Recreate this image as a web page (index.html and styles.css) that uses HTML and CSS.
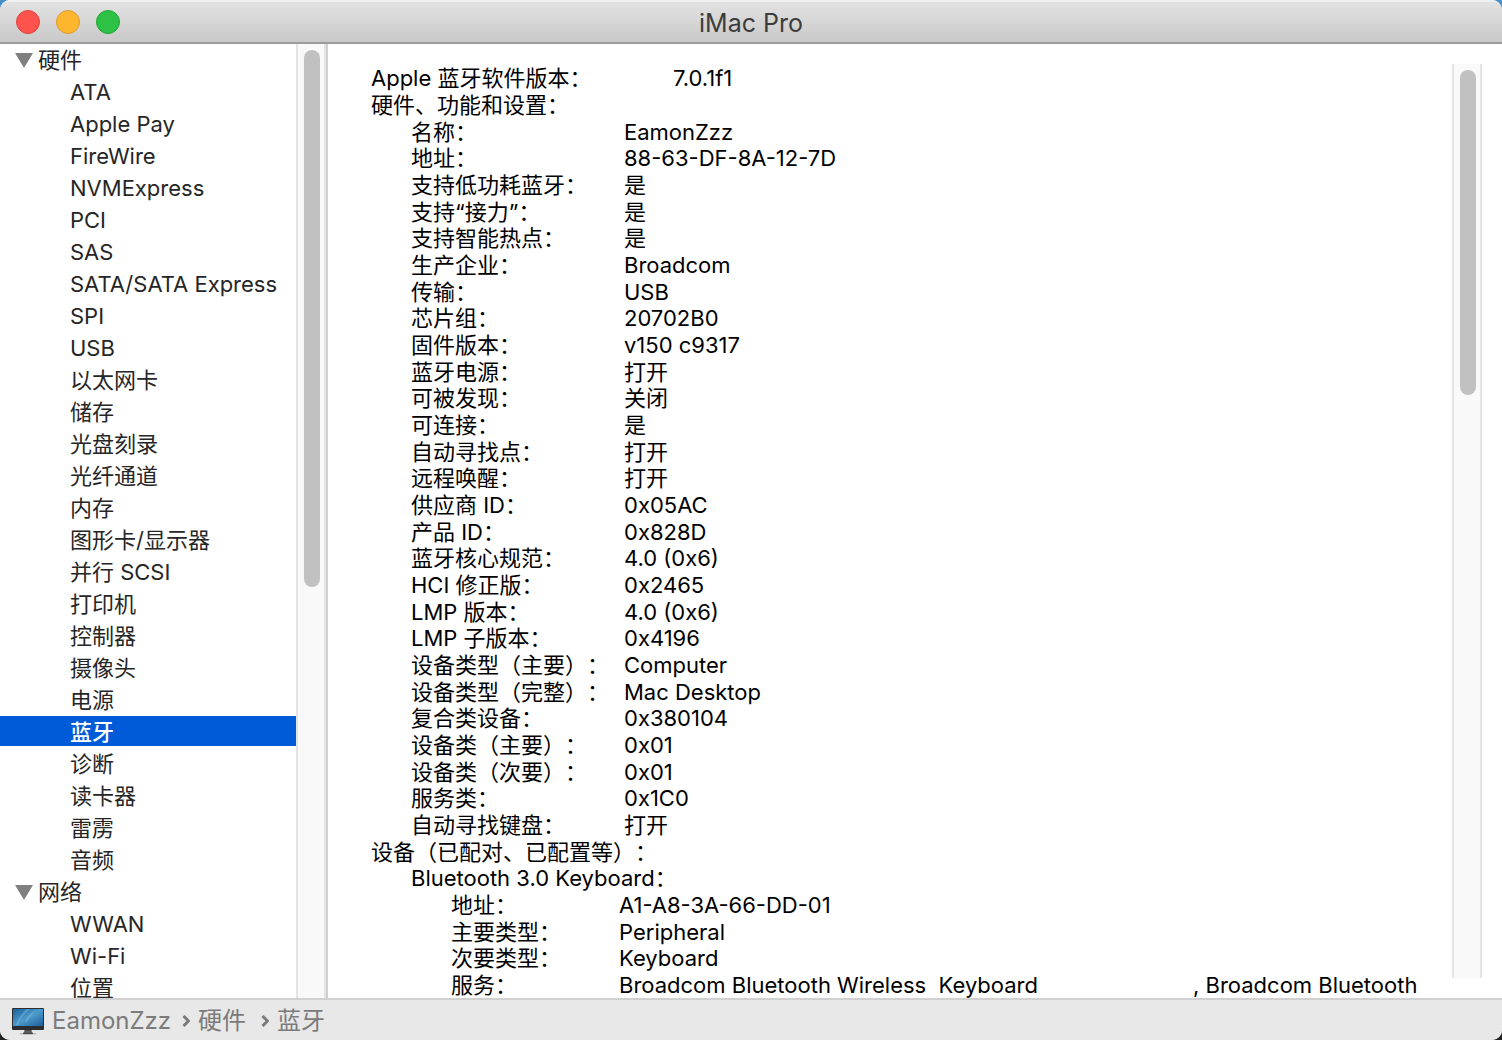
FILE: index.html
```html
<!DOCTYPE html>
<html lang="zh-CN">
<head>
<meta charset="utf-8">
<title>iMac Pro</title>
<link rel="stylesheet" href="styles.css">
</head>
<body>
<div class="window">
  <header class="titlebar">
    <div class="lights">
      <button class="light close" aria-label="关闭"></button>
      <button class="light minimize" aria-label="最小化"></button>
      <button class="light expand" aria-label="缩放"></button>
    </div>
    <h1 class="title">iMac Pro</h1>
  </header>
  <main class="main">
    <nav class="sidebar">
      <div class="tree">
        <button class="group"><svg class="arrow" viewBox="0 0 18 15" aria-hidden="true"><path d="M0 0H18L9 15Z"/></svg>硬件</button>
        <button class="item">ATA</button>
        <button class="item">Apple Pay</button>
        <button class="item">FireWire</button>
        <button class="item">NVMExpress</button>
        <button class="item">PCI</button>
        <button class="item">SAS</button>
        <button class="item">SATA/SATA Express</button>
        <button class="item">SPI</button>
        <button class="item">USB</button>
        <button class="item">以太网卡</button>
        <button class="item">储存</button>
        <button class="item">光盘刻录</button>
        <button class="item">光纤通道</button>
        <button class="item">内存</button>
        <button class="item">图形卡/显示器</button>
        <button class="item">并行 SCSI</button>
        <button class="item">打印机</button>
        <button class="item">控制器</button>
        <button class="item">摄像头</button>
        <button class="item">电源</button>
        <button class="item selected">蓝牙</button>
        <button class="item">诊断</button>
        <button class="item">读卡器</button>
        <button class="item">雷雳</button>
        <button class="item">音频</button>
        <button class="group"><svg class="arrow" viewBox="0 0 18 15" aria-hidden="true"><path d="M0 0H18L9 15Z"/></svg>网络</button>
        <button class="item">WWAN</button>
        <button class="item">Wi-Fi</button>
        <button class="item">位置</button>
      </div>
      <div class="track"><div class="thumb tree-thumb"></div></div>
    </nav>
    <section class="report">
      <dl class="rows">
        <div class="row wide"><dt>Apple 蓝牙软件版本：</dt><dd>7.0.1f1</dd></div>
        <div class="row"><dt>硬件、功能和设置：</dt></div>
        <div class="row sub"><dt>名称：</dt><dd>EamonZzz</dd></div>
        <div class="row sub"><dt>地址：</dt><dd>88-63-DF-8A-12-7D</dd></div>
        <div class="row sub"><dt>支持低功耗蓝牙：</dt><dd>是</dd></div>
        <div class="row sub"><dt>支持“接力”：</dt><dd>是</dd></div>
        <div class="row sub"><dt>支持智能热点：</dt><dd>是</dd></div>
        <div class="row sub"><dt>生产企业：</dt><dd>Broadcom</dd></div>
        <div class="row sub"><dt>传输：</dt><dd>USB</dd></div>
        <div class="row sub"><dt>芯片组：</dt><dd>20702B0</dd></div>
        <div class="row sub"><dt>固件版本：</dt><dd>v150 c9317</dd></div>
        <div class="row sub"><dt>蓝牙电源：</dt><dd>打开</dd></div>
        <div class="row sub"><dt>可被发现：</dt><dd>关闭</dd></div>
        <div class="row sub"><dt>可连接：</dt><dd>是</dd></div>
        <div class="row sub"><dt>自动寻找点：</dt><dd>打开</dd></div>
        <div class="row sub"><dt>远程唤醒：</dt><dd>打开</dd></div>
        <div class="row sub"><dt>供应商 ID：</dt><dd>0x05AC</dd></div>
        <div class="row sub"><dt>产品 ID：</dt><dd>0x828D</dd></div>
        <div class="row sub"><dt>蓝牙核心规范：</dt><dd>4.0 (0x6)</dd></div>
        <div class="row sub"><dt>HCI 修正版：</dt><dd>0x2465</dd></div>
        <div class="row sub"><dt>LMP 版本：</dt><dd>4.0 (0x6)</dd></div>
        <div class="row sub"><dt>LMP 子版本：</dt><dd>0x4196</dd></div>
        <div class="row sub"><dt>设备类型（主要）：</dt><dd>Computer</dd></div>
        <div class="row sub"><dt>设备类型（完整）：</dt><dd>Mac Desktop</dd></div>
        <div class="row sub"><dt>复合类设备：</dt><dd>0x380104</dd></div>
        <div class="row sub"><dt>设备类（主要）：</dt><dd>0x01</dd></div>
        <div class="row sub"><dt>设备类（次要）：</dt><dd>0x01</dd></div>
        <div class="row sub"><dt>服务类：</dt><dd>0x1C0</dd></div>
        <div class="row sub"><dt>自动寻找键盘：</dt><dd>打开</dd></div>
        <div class="row"><dt>设备（已配对、已配置等）：</dt></div>
        <div class="row sub"><dt>Bluetooth 3.0 Keyboard：</dt></div>
        <div class="row device"><dt>地址：</dt><dd>A1-A8-3A-66-DD-01</dd></div>
        <div class="row device"><dt>主要类型：</dt><dd>Peripheral</dd></div>
        <div class="row device"><dt>次要类型：</dt><dd>Keyboard</dd></div>
        <div class="row device"><dt>服务：</dt><dd class="services"><span>Broadcom Bluetooth Wireless&nbsp; Keyboard</span><span>, Broadcom Bluetooth</span></dd></div>
      </dl>
      <div class="track report-track"><div class="thumb report-thumb"></div></div>
    </section>
  </main>
  <footer class="pathbar">
    <svg class="imac" viewBox="0 0 32 28" aria-hidden="true">
      <defs>
        <linearGradient id="screen" x1="0" y1="0" x2="1" y2="1"><stop offset="0" stop-color="#1c5f9e"/><stop offset=".5" stop-color="#4c9bcb"/><stop offset="1" stop-color="#1d5c98"/></linearGradient>
        <linearGradient id="stand" x1="0" y1="0" x2="0" y2="1"><stop offset="0" stop-color="#222"/><stop offset="1" stop-color="#777"/></linearGradient>
      </defs>
      <ellipse cx="16" cy="26.8" rx="9" ry="1" fill="#bbb"/>
      <path d="M12.8 21H19.2L20 26H12Z" fill="url(#stand)"/>
      <rect x="11" y="25.6" width="10" height="1.4" rx=".6" fill="#444"/>
      <rect y="1" width="32" height="22" rx="1" fill="#2b2d30"/>
      <rect x="1" y="2" width="30" height="17" fill="url(#screen)"/>
      <path d="M4 18Q7 9 15 2H18Q9 9 6 18ZM13 15Q16 7 24 3Q18 9 15 15Z" fill="#8dc4e4" opacity=".4"/>
    </svg>
    <a href="#computer">EamonZzz</a>
    <svg class="chevron" viewBox="0 0 8 12" aria-hidden="true"><path d="M1.5 1L6.5 6L1.5 11"/></svg>
    <a class="folder" href="#hardware">硬件</a>
    <svg class="chevron" viewBox="0 0 8 12" aria-hidden="true"><path d="M1.5 1L6.5 6L1.5 11"/></svg>
    <a href="#bluetooth">蓝牙</a>
  </footer>
</div>
</body>
</html>
```
FILE: styles.css
```css
* { box-sizing: border-box; }

body {
  margin: 0;
  background: linear-gradient(#4a90c8 50%, #222 50%);
  font-family: Inter, "Noto Sans CJK SC", sans-serif;
  font-size: 22px;
  color: #000;
  text-spacing-trim: space-all;
}

button {
  border: 0;
  padding: 0;
  background: none;
  font: inherit;
  color: inherit;
  text-align: left;
}

.window {
  display: flex;
  flex-direction: column;
  height: 100vh;
  border-radius: 10px;
  overflow: hidden;
  background: #fff;
}

.titlebar {
  display: grid;
  grid-template-columns: 1fr auto 1fr;
  align-items: center;
  flex: none;
  height: 44px;
  padding: 0 16px;
  border-top: 2px solid #f0f0f0;
  border-bottom: 2px solid #9c9c9c;
  background: linear-gradient(#e2e2e2, #c9c9c9);
}

.lights { display: flex; gap: 16px; }

.light {
  width: 24px;
  height: 24px;
  border: 1px solid;
  border-radius: 50%;
}

.close { background: #ff544d; border-color: #e0443e; }
.minimize { background: #ffb62f; border-color: #dd9a2f; }
.expand { background: #2dc245; border-color: #22a535; }

.title {
  margin: 0;
  padding-top: 2px;
  font-size: 25px;
  font-weight: 400;
  line-height: 32px;
  color: #3c3c3c;
}

.main {
  display: flex;
  flex: 1;
  min-height: 0;
}

.sidebar {
  display: flex;
  flex: none;
  border-right: 2px solid #d0d0d0;
  color: #262626;
}

.tree {
  display: flex;
  flex-direction: column;
  gap: 2px;
  width: 296px;
  overflow: hidden;
}

.group, .item {
  flex: none;
  height: 30px;
  padding-top: 2px;
  line-height: 28px;
  white-space: nowrap;
}

.group {
  display: flex;
  align-items: center;
  gap: 5px;
  padding-left: 15px;
}

.arrow { width: 18px; height: 15px; fill: #808080; }
.item { padding-left: 70px; }
.selected { background: #005bd8; color: #fff; font-weight: 500; }

.track {
  flex: none;
  width: 30px;
  padding: 6px;
  border: solid #e4e4e4;
  border-width: 0 2px;
  background: #f9f9f9;
}

.thumb { width: 16px; border-radius: 8px; background: #c1c1c1; }
.tree-thumb { height: 57%; }
.report-thumb { height: 36%; }

.report {
  display: flex;
  flex: 1;
  min-width: 0;
  padding: 20px 20px 0 43px;
}

.rows {
  flex: 1;
  min-width: 0;
  margin: 0;
  overflow: hidden;
}

.row {
  display: flex;
  height: 27px;
  line-height: 28px;
  white-space: nowrap;
}

/* Three rows span 80px. */
.row:nth-child(3n) { height: 26px; }

.row dt { flex: none; }
.row dd { margin: 0; }
.wide dt { width: 302px; }
.sub { padding-left: 40px; }
.sub dt { width: 213px; }
.device { padding-left: 80px; }
.device dt { width: 168px; }
.services { display: flex; }
.services span:first-child { width: 574px; }

.report-track { margin-bottom: 20px; }

.pathbar {
  display: flex;
  align-items: center;
  flex: none;
  height: 42px;
  padding: 2px 12px 0;
  border-top: 2px solid #d0d0d0;
  background: #e8e8e8;
  font-size: 24px;
  line-height: 36px;
}

.pathbar a { color: #7b7b7b; text-decoration: none; }
.pathbar .folder { padding-right: 4px; }
.imac { width: 32px; height: 28px; margin-right: 8px; }

.chevron {
  width: 8px;
  height: 12px;
  margin: 0 8px 0 11px;
  fill: none;
  stroke: #7b7b7b;
  stroke-width: 3;
}
```
